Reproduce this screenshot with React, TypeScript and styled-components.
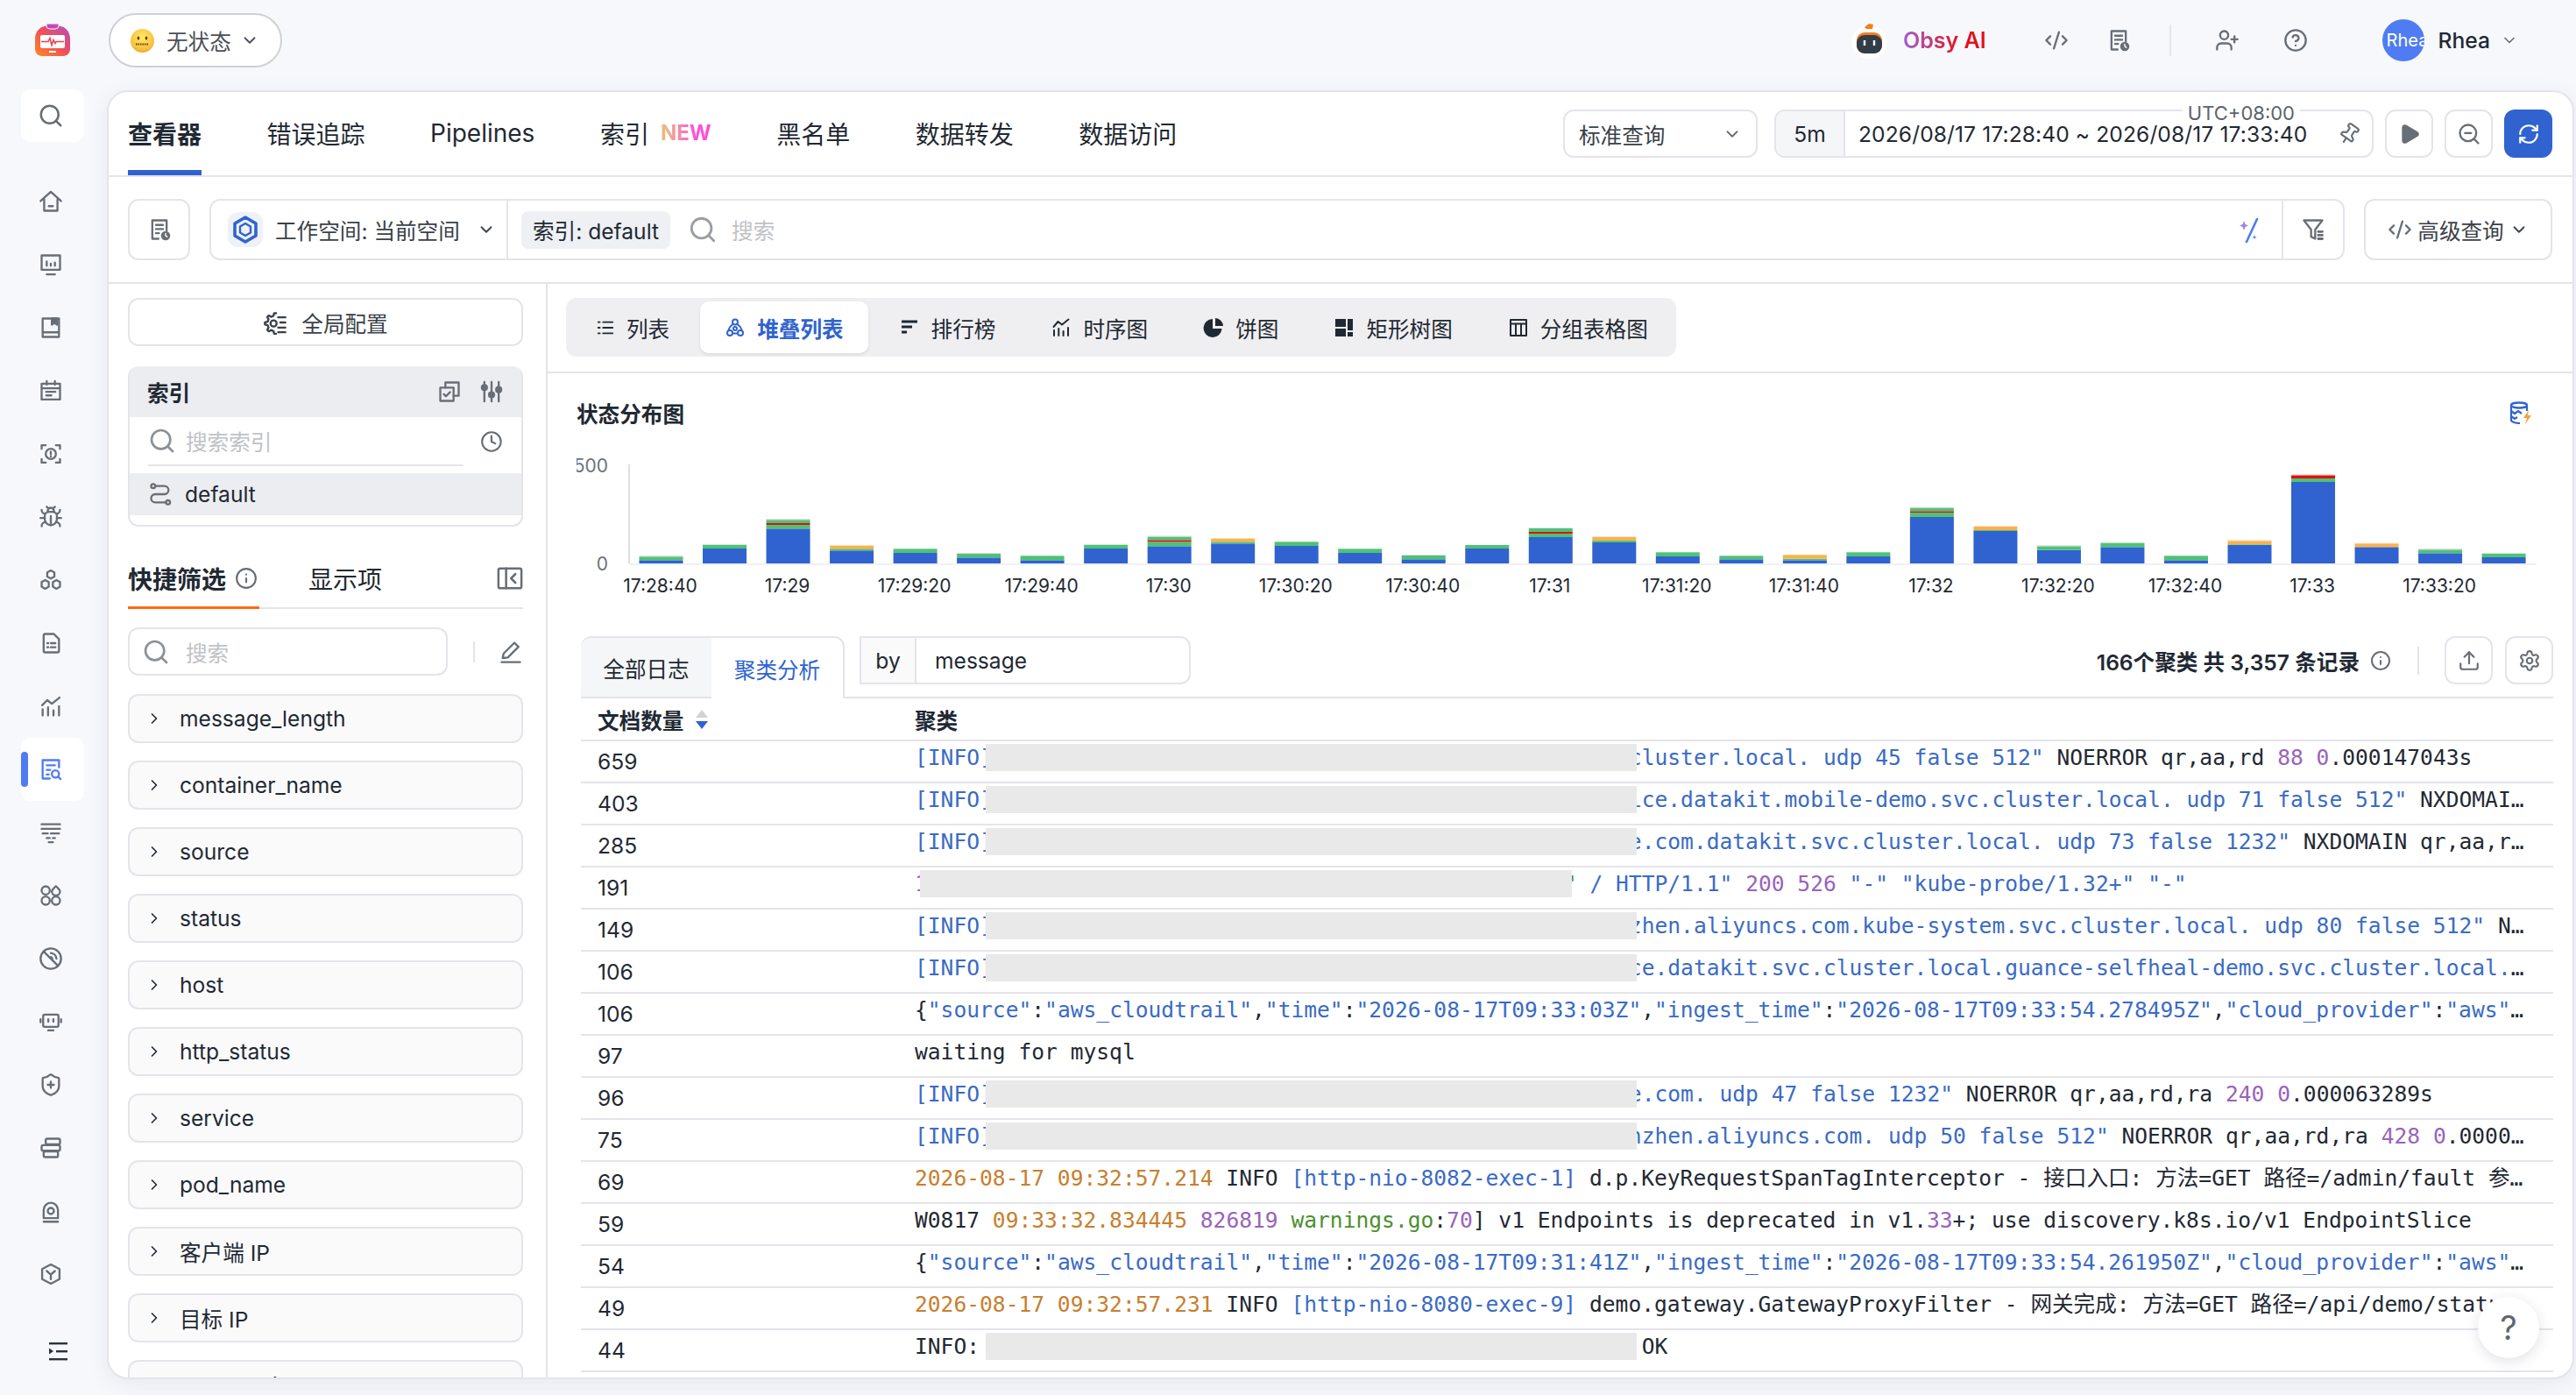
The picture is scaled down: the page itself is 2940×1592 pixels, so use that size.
import React from 'react';
import styled, { createGlobalStyle } from 'styled-components';
import { Bug, ChevronDown, ChevronRight, Clock, CodeXml, Info, Pin, Play, RefreshCw, Search, Settings, ShieldPlus, Upload, UserPlus, ZoomOut, CircleHelp } from 'lucide-react';

const SANS = `Inter, "Noto Sans CJK SC", sans-serif`;
const MONO = `"DejaVu Sans Mono", "Noto Sans CJK SC", monospace`;
const INK = '#1f2933';
const LINE = '#e4e4ea';
const BLUE = '#3063cf';
const GREY = '#686e76';

const GlobalStyle = createGlobalStyle`
	html, body { margin: 0; padding: 0; background: #f6f8fc; }
	body { font-family: ${SANS}; color: ${INK}; font-size: 24.6px; }
	* { box-sizing: border-box; }
`;

const Page = styled.div`
	display: flex;
	width: 2940px;
	height: 1592px;
	overflow: hidden;
	background: #f6f8fc;
`;

const Rail = styled.nav`
	width: 122px;
	flex: none;
	display: flex;
	flex-direction: column;
	padding: 27px 0 38px 24px;
`;

const LogoBox = styled.div`
	height: 37px;
	margin-left: 16px;
	margin-bottom: 38px;
	display: flex;
`;

const RailSearch = styled.div`
	width: 72px;
	height: 60px;
	margin-bottom: 32px;
	background: #fff;
	border-radius: 10px;
	display: flex;
	align-items: center;
	justify-content: center;
	padding-right: 4px;
	color: ${GREY};
`;

const RailItem = styled.div<{ $active?: boolean }>`
	position: relative;
	width: 72px;
	height: 72px;
	flex: none;
	border-radius: 10px;
	padding-right: 4px;
	display: flex;
	align-items: center;
	justify-content: center;
	color: ${({ $active }) => ($active ? '#4f7cf2' : GREY)};
	background: ${({ $active }) => ($active ? '#fff' : 'transparent')};
	${({ $active }) => $active && `
		&::before {
			content: '';
			position: absolute;
			left: 0;
			top: 16px;
			width: 8px;
			height: 40px;
			border-radius: 4px;
			background: #4f7cf2;
		}
	`}
`;

const RailCollapse = styled.div`
	margin-top: auto;
	margin-left: 30px;
	display: flex;
	color: #2b333b;
`;

const MainCol = styled.div`
	flex: 1;
	min-width: 0;
	display: flex;
	flex-direction: column;
`;

const TopBar = styled.header`
	height: 103px;
	flex: none;
	display: flex;
	align-items: center;
	padding: 0 66px 11px 2px;
`;

const StatusPill = styled.div`
	width: 198px;
	height: 62px;
	border: 2px solid #cfd0d4;
	border-radius: 31px;
	background: #fff;
	display: flex;
	align-items: center;
	padding-left: 23px;
	color: #4a5058;
	svg:last-child { margin-left: 10px; }
`;

const PillText = styled.span`
	margin-left: 14px;
`;

const TopRight = styled.div`
	margin-left: auto;
	display: flex;
	align-items: center;
	color: ${GREY};
`;

const ObsyText = styled.span`
	margin: 0 66px 0 14px;
	font-size: 25px;
	font-weight: 600;
	background: linear-gradient(90deg, #a35fd0, #e5101b 70%);
	-webkit-background-clip: text;
	background-clip: text;
	color: transparent;
`;

const TopDivider = styled.span`
	width: 2px;
	height: 36px;
	background: #e6e7ec;
	margin: 0 50px 0 44px;
`;

const Spaced = styled.span<{ $right: number }>`
	display: flex;
	margin-right: ${({ $right }) => $right}px;
`;

const Avatar = styled.span`
	width: 48px;
	height: 48px;
	border-radius: 50%;
	background: #4f7cf2;
	color: #fff;
	font-size: 20px;
	overflow: hidden;
	display: flex;
	align-items: center;
	white-space: nowrap;
	padding-left: 5px;
`;

const UserName = styled.span`
	margin: 0 12px 0 16px;
	font-weight: 500;
	color: ${INK};
`;

const Card = styled.main`
	width: 2816px;
	height: 1471px;
	flex: none;
	position: relative;
	background: #fff;
	border: 2px solid ${LINE};
	border-radius: 24px;
	box-shadow: 0 6px 24px rgba(60, 70, 100, 0.08);
	overflow: hidden;
	display: flex;
	flex-direction: column;
`;

const TabBar = styled.div`
	height: 97px;
	flex: none;
	display: flex;
	align-items: center;
	padding: 0 23px 0 22px;
	border-bottom: 2px solid ${LINE};
`;

const Tabs = styled.div`
	display: flex;
	gap: 74.5px;
	height: 100%;
`;

const Tab = styled.div<{ $active?: boolean }>`
	position: relative;
	display: flex;
	align-items: center;
	gap: 13px;
	font-size: 28px;
	font-weight: ${({ $active }) => ($active ? 700 : 400)};
	padding-bottom: 2px;
	${({ $active }) => $active && `
		&::after {
			content: '';
			position: absolute;
			left: 0;
			right: 0;
			bottom: 0;
			height: 6px;
			background: ${BLUE};
		}
	`}
`;

const NewMark = styled.span`
	font-size: 24px;
	font-weight: 700;
	background: linear-gradient(90deg, #eeb682 10%, #ff4fd8 70%);
	-webkit-background-clip: text;
	background-clip: text;
	color: transparent;
`;

const TabControls = styled.div`
	margin-left: auto;
	display: flex;
	align-items: center;
	gap: 13px;
`;

const ModeSelect = styled.div`
	width: 222px;
	height: 55px;
	margin-right: 6px;
	border: 2px solid ${LINE};
	border-radius: 12px;
	display: flex;
	align-items: center;
	justify-content: space-between;
	padding: 0 16px;
	color: #3a4149;
`;

const TimeGroup = styled.div`
	position: relative;
	width: 684px;
	height: 55px;
	border: 2px solid ${LINE};
	border-radius: 12px;
	display: flex;
	align-items: center;
`;

const TimeAddon = styled.span`
	width: 79px;
	height: 100%;
	display: flex;
	align-items: center;
	justify-content: center;
	background: #f5f6f8;
	border-right: 2px solid ${LINE};
	border-radius: 10px 0 0 10px;
`;

const TimeText = styled.span`
	margin-left: 15px;
	letter-spacing: 0.1px;
	white-space: nowrap;
`;

const TimePin = styled.span`
	margin-left: auto;
	margin-right: 13px;
	display: flex;
	color: ${GREY};
	svg { transform: rotate(35deg); }
`;

const UtcLabel = styled.span`
	position: absolute;
	right: 82px;
	top: -9px;
	background: #fff;
	padding: 0 6px;
	font-size: 22px;
	line-height: 22px;
	color: #5d646c;
`;

const SquareBtn = styled.button<{ $primary?: boolean }>`
	width: 55px;
	height: 55px;
	padding: 0;
	border: ${({ $primary }) => ($primary ? 'none' : `2px solid ${LINE}`)};
	border-radius: 12px;
	background: ${({ $primary }) => ($primary ? BLUE : '#fff')};
	color: ${({ $primary }) => ($primary ? '#fff' : GREY)};
	display: flex;
	align-items: center;
	justify-content: center;
	flex: none;
`;

const Toolbar = styled.div`
	height: 122px;
	flex: none;
	display: flex;
	align-items: center;
	gap: 22px;
	padding: 0 23px 0 22px;
	border-bottom: 2px solid ${LINE};
`;

const HistoryBtn = styled(SquareBtn)`
	width: 71px;
	height: 70px;
`;

const QueryBox = styled.div`
	flex: 1;
	height: 70px;
	border: 2px solid ${LINE};
	border-radius: 12px;
	display: flex;
	align-items: center;
`;

const Workspace = styled.div`
	width: 339px;
	height: 100%;
	flex: none;
	display: flex;
	align-items: center;
	padding: 0 12px 0 19px;
	border-right: 2px solid ${LINE};
	color: #3a4149;
`;

const WorkspaceText = styled.span`
	margin: 0 auto 0 14px;
	white-space: nowrap;
`;

const IndexTag = styled.span`
	margin: 0 20px 0 15px;
	height: 43px;
	padding: 0 13px;
	border-radius: 8px;
	background: #eef0f3;
	display: flex;
	align-items: center;
	white-space: nowrap;
`;

const Placeholder = styled.span<{ $left: number }>`
	margin-left: ${({ $left }) => $left}px;
	color: #bfc2c6;
	white-space: nowrap;
`;

const QueryTail = styled.div`
	margin-left: auto;
	height: 100%;
	display: flex;
	align-items: center;
	color: ${GREY};
`;

const FilterCell = styled.div`
	width: 70px;
	height: 100%;
	margin-left: 20px;
	border-left: 2px solid ${LINE};
	display: flex;
	align-items: center;
	justify-content: center;
`;

const AdvancedBtn = styled.div`
	width: 215px;
	height: 70px;
	flex: none;
	border: 2px solid ${LINE};
	border-radius: 12px;
	display: flex;
	align-items: center;
	justify-content: center;
	gap: 6px;
	color: #3a4149;
	white-space: nowrap;
`;

const Body = styled.div`
	flex: 1;
	min-height: 0;
	display: flex;
`;

const LeftPane = styled.aside`
	width: 501px;
	flex: none;
	padding: 16px 26px 0 22px;
	border-right: 2px solid ${LINE};
	overflow: hidden;
`;

const ConfigBtn = styled.div`
	height: 55px;
	border: 2px solid ${LINE};
	border-radius: 12px;
	display: flex;
	align-items: center;
	justify-content: center;
	gap: 16px;
	color: #3a4149;
`;

const IndexPanel = styled.section`
	height: 183px;
	margin-top: 23px;
	border: 2px solid ${LINE};
	border-top: none;
	border-radius: 12px;
	overflow: hidden;
`;

const IndexHead = styled.div`
	height: 58px;
	background: #ecedf0;
	display: flex;
	align-items: center;
	gap: 20px;
	padding: 0 20px;
	color: ${GREY};
`;

const IndexTitle = styled.strong`
	margin-right: auto;
	color: ${INK};
	font-weight: 700;
`;

const IndexSearch = styled.div`
	height: 64px;
	display: flex;
	align-items: center;
	padding: 0 21px 8px;
	color: ${GREY};
`;

const IndexInput = styled.div`
	width: 363px;
	height: 56px;
	margin-right: 19px;
	border-bottom: 2px solid ${LINE};
	display: flex;
	align-items: center;
	color: #8c9196;
`;

const IndexRow = styled.div`
	height: 48px;
	background: #ecedf0;
	display: flex;
	align-items: center;
	gap: 14px;
	padding: 0 21px;
	color: ${GREY};
`;

const IndexName = styled.span`
	color: ${INK};
`;

const FilterTabs = styled.div`
	height: 60px;
	margin-top: 34px;
	display: flex;
	align-items: center;
	border-bottom: 2px solid ${LINE};
	position: relative;
	color: ${GREY};
	padding-bottom: 8px;
	&::after {
		content: '';
		position: absolute;
		left: 0;
		bottom: -2px;
		width: 150px;
		height: 3px;
		background: #ff6a13;
	}
`;

const FilterTab = styled.span<{ $active?: boolean }>`
	font-size: 28px;
	font-weight: ${({ $active }) => ($active ? 700 : 400)};
	color: ${INK};
	margin-right: ${({ $active }) => ($active ? 10 : 0)}px;
`;

const TabGap = styled.span`
	width: 58px;
`;

const PanelToggle = styled.span`
	margin-left: auto;
	display: flex;
`;

const FilterSearchRow = styled.div`
	margin-top: 21px;
	display: flex;
	align-items: center;
	color: ${GREY};
`;

const FilterInput = styled.div`
	width: 365px;
	height: 55px;
	flex: none;
	border: 2px solid ${LINE};
	border-radius: 12px;
	display: flex;
	align-items: center;
	padding: 0 14px;
	color: #8c9196;
`;

const ThinDivider = styled.span`
	width: 2px;
	height: 24px;
	flex: none;
	margin: 0 27px 0 29px;
	background: ${LINE};
`;

const FacetList = styled.div`
	margin-top: 21px;
	display: flex;
	flex-direction: column;
	gap: 20px;
`;

const Facet = styled.div`
	height: 56px;
	flex: none;
	border: 2px solid ${LINE};
	border-radius: 12px;
	background: #fafafb;
	display: flex;
	align-items: center;
	gap: 19px;
	padding-left: 18px;
`;

const RightPane = styled.section`
	flex: 1;
	min-width: 0;
	display: flex;
	flex-direction: column;
	overflow: hidden;
`;

const ViewRow = styled.div`
	height: 102px;
	flex: none;
	padding: 16px 0 0 21px;
	border-bottom: 2px solid ${LINE};
`;

const ViewTabs = styled.div`
	width: fit-content;
	height: 67px;
	padding: 4px 4px 4px 6px;
	gap: 7px;
	display: flex;
	background: #efeff1;
	border-radius: 12px;
`;

const ViewTab = styled.div<{ $active?: boolean }>`
	display: flex;
	align-items: center;
	gap: 13px;
	padding: 0 28px;
	border-radius: 10px;
	font-weight: ${({ $active }) => ($active ? 600 : 400)};
	color: ${({ $active }) => ($active ? BLUE : INK)};
	background: ${({ $active }) => ($active ? '#fff' : 'transparent')};
	box-shadow: ${({ $active }) => ($active ? '0 2px 4px rgba(0,0,0,0.08)' : 'none')};
`;

const ChartBlock = styled.div`
	height: 300px;
	flex: none;
	padding: 0 22px 0 33px;
`;

const ChartHead = styled.div`
	height: 90px;
	display: flex;
	align-items: center;
	justify-content: space-between;
	padding-right: 24px;
`;

const ChartTitle = styled.strong`
	font-weight: 600;
`;

const ChartSvg = styled.svg`
	display: block;
`;

const LogTabs = styled.div`
	height: 71px;
	flex: none;
	margin: 0 22px 0 38px;
	display: flex;
	position: relative;
`;

const LogTab = styled.div<{ $active?: boolean }>`
	width: ${({ $active }) => ($active ? 152 : 149)}px;
	height: 100%;
	flex: none;
	display: flex;
	align-items: center;
	justify-content: center;
	background: ${({ $active }) => ($active ? '#fff' : '#f5f6f8')};
	color: ${({ $active }) => ($active ? BLUE : INK)};
	border-top: 2px solid ${LINE};
	border-right: ${({ $active }) => ($active ? `2px solid ${LINE}` : 'none')};
	border-bottom: ${({ $active }) => ($active ? 'none' : `2px solid ${LINE}`)};
	border-radius: ${({ $active }) => ($active ? '0 12px 0 0' : '12px 0 0 0')};
`;

const LogTabsRest = styled.div`
	flex: 1;
	display: flex;
	align-items: flex-start;
	padding-left: 17px;
	border-bottom: 2px solid ${LINE};
`;

const ByGroup = styled.div`
	width: 378px;
	height: 55px;
	border: 2px solid ${LINE};
	border-radius: 0 12px 12px 0;
	display: flex;
	align-items: center;
`;

const ByAddon = styled.span`
	width: 63px;
	height: 100%;
	display: flex;
	align-items: center;
	justify-content: center;
	background: #fafafb;
	border-right: 2px solid ${LINE};
`;

const ByValue = styled.span`
	margin-left: 21px;
`;

const LogStats = styled.div`
	margin-left: auto;
	height: 55px;
	display: flex;
	align-items: center;
	color: ${GREY};
`;

const StatText = styled.span`
	font-weight: 600;
	color: ${INK};
	white-space: nowrap;
	margin-right: 12px;
`;

const StatDivider = styled.span`
	width: 2px;
	height: 32px;
	margin: 0 29px 0 30px;
	background: ${LINE};
`;

const StatBtns = styled.div`
	display: flex;
	gap: 14px;
`;

const Table = styled.div`
	margin: 0 22px 0 38px;
	flex: 1;
	min-height: 0;
`;

const HeadRow = styled.div`
	height: 49px;
	display: flex;
	align-items: center;
	border-bottom: 2px solid ${LINE};
	font-weight: 600;
`;

const CountCol = styled.div`
	width: 381px;
	flex: none;
	padding-left: 19px;
	display: flex;
	align-items: center;
	gap: 13px;
`;

const LogRow = styled.div`
	height: 48px;
	display: flex;
	border-bottom: 2px solid ${LINE};
`;

const CountCell = styled(CountCol)`
	height: 46px;
	font-weight: 400;
`;

const Message = styled.div`
	width: 1842px;
	padding-top: 3px;
	font-family: ${MONO};
	font-size: 24.6px;
	line-height: 31px;
	white-space: nowrap;
	overflow: hidden;
	text-overflow: ellipsis;
`;

const tones = {
	ink: INK,
	blue: '#3a6bc5',
	purple: '#9a62bb',
	orange: '#c77f2e',
	green: '#4b8f2f',
};

type Tone = keyof typeof tones;

const Seg = styled.span<{ $tone: Tone }>`
	color: ${({ $tone }) => tones[$tone]};
`;

const Redact = styled.span<{ $width: number; $before: number; $after: number }>`
	position: relative;
	z-index: 1;
	display: inline-block;
	vertical-align: top;
	height: 31px;
	width: ${({ $width }) => $width}px;
	margin-left: ${({ $before }) => -$before}px;
	margin-right: ${({ $after }) => -$after}px;
	background: #e9e9e9;
`;

const HelpFab = styled.div`
	position: absolute;
	right: 38px;
	bottom: 22px;
	width: 70px;
	height: 70px;
	border-radius: 50%;
	background: #fff;
	box-shadow: 0 4px 16px rgba(40, 50, 80, 0.14);
	z-index: 3;
	display: flex;
	align-items: center;
	justify-content: center;
	font-size: 38px;
	color: #5f666e;
`;

/* small drawn icons */
const Svg = ({ size = 28, children, fill = 'none', sw = 2 }: { size?: number; children: React.ReactNode; fill?: string; sw?: number }) => (
	<svg width={size} height={size} viewBox="0 0 24 24" fill={fill} stroke="currentColor" strokeWidth={sw} strokeLinecap="round" strokeLinejoin="round">
		{children}
	</svg>
);

const railIcons: React.ReactNode[] = [
	<Svg key="home"><path d="M2 11.5 12 2.5l10 9M5.5 10v11h13V10M10 16.5h4" /></Svg>,
	<Svg key="board"><path d="M3 3h18v14H3zM8 21.5h8M8 9v4M12 11v2M16 10v3" /></Svg>,
	<Svg key="book"><path d="M4 3h16v18H4zM4 16.5h16" /><path d="M13 3v6l2.5-1.8L18 9V3z" fill="currentColor" /></Svg>,
	<Svg key="cal"><path d="M3 5h18v15.5H3zM8 2.5V6M16 2.5V6M3 9.5h18M7.5 13h9M7.5 16.5h5" /></Svg>,
	<Svg key="scan"><path d="M3 7V3.5h4M17 3.5h4V7M21 17v3.5h-4M7 20.5H3V17" /><circle cx="12" cy="12" r="5" /><path d="M12 9.8v2.6M12 14.4v.1" /></Svg>,
	<Bug key="bug" size={28} />,
	<Svg key="hex"><path d="M12 2.5l3.5 2v4l-3.5 2-3.5-2v-4zM6.5 12l3.5 2v4.5l-3.5 2-3.5-2V14zM17.5 12l3.5 2v4.5l-3.5 2-3.5-2V14z" /></Svg>,
	<Svg key="file"><path d="M5 4.5A1.5 1.5 0 0 1 6.5 3H15l5 5v11.5a1.5 1.5 0 0 1-1.5 1.5h-12A1.5 1.5 0 0 1 5 19.500zM8.500 12h1M12 12h4.500M8.500 16h1M12 16h4.500" /></Svg>,
	<Svg key="chart"><path d="M4 21v-6M9.300 21v-8M14.600 21v-5M20 21v-9M3.500 11l5-5 4.500 3.500 7.500-6" /></Svg>,
	<Svg key="logs"><path d="M20 10V3H4v18h7M8 8h8M8 12.500h3.500M8 17h2" /><circle cx="16.500" cy="16.500" r="3.500" /><path d="m19.500 19.500 2 2" /></Svg>,
	<Svg key="pipe"><path d="M3 4h18M3 8.500h18M4 13h5M12 13h8M8 17.500h3M14 17.500h2M10 21.500h4" /></Svg>,
	<Svg key="apps"><circle cx="7" cy="7" r="4" /><path d="M17 2.800c2.500 2.500 4 3.300 4 5.200a4 4 0 0 1-8 0c0-1.900 1.500-2.700 4-5.200z" /><circle cx="7" cy="17" r="4" /><circle cx="17" cy="17" r="4" /></Svg>,
	<Svg key="nosignal"><circle cx="12" cy="12" r="10" /><path d="m5 5 14 14M12 6.500a6 6 0 0 1 5.500 5.500M12 10.500a2 2 0 0 1 1.500 1.500" /></Svg>,
	<Svg key="robot"><path d="M6 5h12a1.500 1.500 0 0 1 1.500 1.500v9A1.500 1.500 0 0 1 18 17H6a1.500 1.500 0 0 1-1.500-1.500v-9A1.500 1.500 0 0 1 6 5zM2 9.500v3M22 9.500v3M9.500 20.500h5M9.500 9.500v2.500M14.500 9.500v2.500" /></Svg>,
	<ShieldPlus key="shield" size={28} />,
	<Svg key="stack"><rect x="7" y="3" width="14" height="5.500" rx="1.500" /><rect x="3" y="9.300" width="18" height="5.500" rx="1.500" /><rect x="5" y="15.500" width="14" height="5.500" rx="1.500" /></Svg>,
	<Svg key="alarm"><path d="M5 19V11a7 7 0 0 1 14 0v8zM5 22.500h14" /><circle cx="12" cy="12" r="3" /></Svg>,
	<Svg key="cube"><path d="M12 2.500 20.500 7v10L12 21.500 3.500 17V7zM8 9l4 3.500L16 9M12 12.500V17" /></Svg>,
];

const Logo = () => (
	<svg width="40" height="37" viewBox="0 0 40 37">
		<defs>
			<linearGradient id="logoGrad" x1="0" y1="1" x2="1" y2="0">
				<stop offset="0" stopColor="#ff8a1e" />
				<stop offset="0.5" stopColor="#f0505a" />
				<stop offset="1" stopColor="#b34cc0" />
			</linearGradient>
		</defs>
		<path d="M6 5 C10 1 30 1 34 5 C38 8 40 12 40 18 V29 C40 34 36 37 32 37 H8 C4 37 0 34 0 29 V18 C0 12 2 8 6 5z" fill="url(#logoGrad)" />
		<path d="M13 0h14v3a4 4 0 0 1-4 3h-6a4 4 0 0 1-4-3z" fill="#c04bb4" stroke="#fff" strokeWidth="1" />
		<rect x="6" y="13" width="28" height="15" rx="2" fill="#fff" />
		<path d="M7 20.500h8l2-4 2 8 2-6 2 4 1-2h9" fill="none" stroke="#ef3f4a" strokeWidth="1.600" />
		<rect x="16" y="31" width="8" height="2" fill="#fff" />
	</svg>
);

const ZipperFace = () => (
	<svg width="27" height="27" viewBox="0 0 27 27">
		<defs>
			<radialGradient id="faceGrad" cx="0.5" cy="0.35" r="0.7">
				<stop offset="0" stopColor="#fde968" />
				<stop offset="0.75" stopColor="#f8c03a" />
				<stop offset="1" stopColor="#ef9a2c" />
			</radialGradient>
		</defs>
		<circle cx="13.500" cy="13.500" r="13.500" fill="url(#faceGrad)" />
		<ellipse cx="9" cy="10.500" rx="1.300" ry="2" fill="#5a3a1a" />
		<ellipse cx="18" cy="10.500" rx="1.300" ry="2" fill="#5a3a1a" />
		<path d="M6 17.500h15" stroke="#5a3a1a" strokeWidth="2" strokeDasharray="1.500 1" />
	</svg>
);

const Robot = () => (
	<svg width="49" height="42" viewBox="0 0 49 42">
		<ellipse cx="24.500" cy="23" rx="20" ry="19" fill="#fff" />
		<path d="M19 6l5-4 5 1-1 5h-7z" fill="#f57c1f" />
		<rect x="10" y="12" width="29" height="24" rx="9" fill="#f57c1f" />
		<rect x="10" y="15" width="29" height="21" rx="9" fill="#333d47" />
		<path d="M19 21v6M30 21v6" stroke="#fff" strokeWidth="2.400" />
	</svg>
);

const DocClock = () => (
	<Svg>
		<path d="M11 21H5V3h14v10M8.500 7.500h7M8.500 11.500h7M8.500 15.500h3" />
		<circle cx="18" cy="18" r="4.500" fill="currentColor" stroke="none" />
		<path d="M18 15.800V18l1.500 1" stroke="#fff" strokeWidth="1.200" />
	</Svg>
);

const WorkspaceLogo = () => (
	<svg width="40" height="40" viewBox="0 0 40 40">
		<rect width="40" height="40" rx="12" fill="#eef1f8" />
		<path d="M20 6l12 7v14l-12 7-12-7V13z" fill="none" stroke="#3063cf" strokeWidth="3.600" strokeLinejoin="round" />
		<path d="M20 13l6 3.500v7L20 27l-6-3.500v-7z" fill="none" stroke="#3063cf" strokeWidth="2.400" strokeLinejoin="round" />
	</svg>
);

const RouteIcon = () => (
	<Svg><circle cx="5" cy="4" r="2" /><circle cx="19.500" cy="20" r="2" /><path d="M7 4h9a4 4 0 0 1 0 8H7a4 4 0 0 0 0 8h10.500" /></Svg>
);

const SlidersIcon = () => (
	<Svg><path d="M5 2.500v19M12 2.500v19M19 2.500v19" /><circle cx="5" cy="8" r="2.500" fill="currentColor" /><circle cx="12" cy="15" r="2.500" fill="currentColor" /><circle cx="19" cy="10" r="2.500" fill="currentColor" /></Svg>
);

const CopyCheck = () => (
	<Svg><path d="M8 8V3h13v13h-5" /><path d="M3 8h13v13H3zM6.500 14.500l2 2 4-4" /></Svg>
);

const PanelLeft = () => (
	<Svg size={30}><rect x="1.500" y="3" width="21" height="18" rx="1.500" /><path d="M8.500 3v18M17 8l-4 4 4 4" /></Svg>
);

const EditLine = () => (
	<Svg size={30}><path d="M4 18l1-4.500L15.500 3l4 4L9 17.500zM3 22h18" /></Svg>
);

const GearList = () => (
	<Svg><path d="M13 3h-2l-.6 2.500-2.400 1-2.200-1.300L4.300 6.700l1.300 2.200-1 2.400L2 12v2l2.600.6 1 2.400-1.300 2.200 1.500 1.500 2.200-1.300 2.400 1 .6 2.600h2" /><circle cx="10.500" cy="13" r="3" /><path d="M15 7h7M17 12h5M15 17h7M15 21.500h7" /></Svg>
);

const ListIcon = () => (
	<Svg size={22}><path d="M3 5h2M9 5h12M3 12h2M9 12h12M3 19h2M9 19h12" /></Svg>
);

const ClusterIcon = () => (
	<Svg size={24}><circle cx="12" cy="5.500" r="3" /><circle cx="6" cy="18" r="3" /><circle cx="18" cy="18" r="3" /><path d="M9.500 8c-3 2-4.500 5-5 7M14.500 8c3 2 4.500 5 5 7M9 18.500h6" /><circle cx="12" cy="13" r="2" /></Svg>
);

const RankIcon = () => (
	<Svg size={24} sw={3}><path d="M3 5h18M3 11h12M3 17h6" strokeLinecap="butt" /></Svg>
);

const SeriesIcon = () => (
	<Svg size={24}><path d="M4 21v-6M9.300 21v-8M14.600 21v-5M20 21v-9M3.500 11l5-6 4.500 3.500 7.500-6" /></Svg>
);

const PieIcon = () => (
	<svg width="24" height="24" viewBox="0 0 24 24" fill="#1f2933"><path d="M11 2v11h10.500A10.500 10.500 0 1 1 11 2z" /><path d="M14 1a9.500 9.500 0 0 1 9 9h-9z" /></svg>
);

const TreemapIcon = () => (
	<svg width="24" height="24" viewBox="0 0 24 24" fill="#1f2933"><rect x="2" y="2" width="12" height="9" /><rect x="2" y="13" width="12" height="9" /><rect x="16" y="2" width="6" height="13" /><rect x="16" y="17" width="6" height="5" /></svg>
);

const TableIcon = () => (
	<Svg size={24}><path d="M3 3h18v18H3zM3 7.500h18M9 7.500V21M15 7.500V21" /></Svg>
);

const CacheIcon = () => (
	<svg width="26" height="26" viewBox="0 0 26 26" fill="none">
		<ellipse cx="11" cy="4.500" rx="9" ry="3" stroke="#3063cf" strokeWidth="2.400" />
		<path d="M2 5v17c2 2 7 3 10 3M20 5v6M2 11l4 3 4-3 4 3M2 17l4 3 3-2" stroke="#3063cf" strokeWidth="2.200" />
		<path d="M22 10l-6 9h4l-2 7 7-10h-4z" fill="#f5a13c" />
	</svg>
);

const SortArrows = () => (
	<svg width="16" height="26" viewBox="0 0 16 26">
		<path d="M8 2l7 9H1z" fill="#d0d2d6" />
		<path d="M8 24l7-9H1z" fill={BLUE} />
	</svg>
);

const MagicIcon = () => (
	<svg width="32" height="32" viewBox="0 0 32 32" fill="none">
		<path d="M24 4 12 30" stroke="#4f7cf2" strokeWidth="2.600" strokeLinecap="round" />
		<path d="M9 6l1.500 4L14 11.500 10.500 13 9 17l-1.500-4L4 11.500 7.500 10z" fill="#a283e0" />
		<path d="M21 22l.8 2 2 .8-2 .8-.8 2-.8-2-2-.8 2-.8z" fill="#6f8be8" />
	</svg>
);

const FilterList = () => (
	<Svg><path d="M3 3h18l-7 9v9l-4-2v-7z" /><path d="M17 14h4M17 17.500h4M17 21h4" strokeWidth="2.400" /></Svg>
);

const Collapse = () => (
	<svg width="24" height="24" viewBox="0 0 24 24" fill="currentColor">
		<rect x="2" y="2" width="21" height="2.400" />
		<rect x="10" y="11" width="13" height="2.400" />
		<rect x="2" y="20" width="21" height="2.400" />
		<path d="M2 8.500 7 12 2 15.500z" />
	</svg>
);

/* status chart: heights in px, bottom to top */
const C = { blue: '#3063cf', green: '#4fc276', red: '#e30f0f', orange: '#fbb14b', grey: '#c9cdd0', pale: '#f6d6c7' };
type Stack = [keyof typeof C, number][];

const bars: Stack[] = [
	[['blue', 3.7], ['green', 4], ['grey', 1]],
	[['blue', 17], ['green', 4.3]],
	[['blue', 39.7], ['green', 4.3], ['red', 2], ['green', 3.7], ['grey', 1]],
	[['blue', 14.7], ['green', 2], ['orange', 3.7]],
	[['blue', 12], ['green', 4.7]],
	[['blue', 6.7], ['green', 4.3], ['grey', 0.7]],
	[['blue', 3.7], ['green', 5]],
	[['blue', 17], ['green', 4.3]],
	[['blue', 19.7], ['green', 5], ['red', 2], ['green', 3.7], ['grey', 1]],
	[['blue', 22.7], ['green', 2], ['orange', 3.7]],
	[['blue', 20], ['green', 4.7]],
	[['blue', 12], ['green', 4.7]],
	[['blue', 4.7], ['green', 4.3], ['grey', 0.7]],
	[['blue', 17], ['green', 4]],
	[['blue', 30], ['green', 4], ['red', 2], ['green', 4], ['grey', 0.5]],
	[['blue', 24], ['green', 2], ['orange', 4], ['pale', 0.7]],
	[['blue', 8], ['green', 4.7]],
	[['blue', 4.7], ['green', 4]],
	[['blue', 3.7], ['green', 1.7], ['orange', 4.3]],
	[['blue', 8], ['green', 4.7]],
	[['blue', 53], ['green', 5], ['red', 1.7], ['green', 3.7], ['grey', 0.7]],
	[['blue', 37], ['green', 1], ['orange', 4], ['pale', 0.7]],
	[['blue', 15.3], ['green', 4.3], ['grey', 1]],
	[['blue', 18.7], ['green', 4.7]],
	[['blue', 3.7], ['green', 5]],
	[['blue', 21], ['green', 0.7], ['orange', 4], ['pale', 1]],
	[['blue', 93], ['green', 4], ['red', 3.7], ['pale', 1]],
	[['blue', 18.7], ['orange', 4], ['pale', 0.7]],
	[['blue', 11.7], ['green', 4], ['grey', 1]],
	[['blue', 7], ['green', 4.3]],
];

const timeLabels = ['17:28:40', '17:29', '17:29:20', '17:29:40', '17:30', '17:30:20', '17:30:40', '17:31', '17:31:20', '17:31:40', '17:32', '17:32:20', '17:32:40', '17:33', '17:33:20'];

const StatusChart = () => {
	// svg origin sits at x=658, y=516 of the page
	const base = 127;
	const x0 = 71.5;
	const step = 72.52;
	return (
		<ChartSvg width="2240" height="175" viewBox="0 0 2240 175">
			<line x1="60" y1="14" x2="60" y2={base} stroke="#dfe0e4" strokeWidth="2" />
			<line x1="60" y1={base + 1} x2="2237" y2={base + 1} stroke="#f0f0f5" strokeWidth="2" />
			<text x="36" y="23" textAnchor="end" fontSize="21" fill="#6d7379" fontFamily={SANS}>500</text>
			<text x="36" y={base + 8} textAnchor="end" fontSize="21" fill="#6d7379" fontFamily={SANS}>0</text>
			{bars.map((stack, i) => {
				let top = base;
				return stack.map(([tone, h], j) => {
					top -= h;
					return <rect key={`${i}-${j}`} x={x0 + step * i} y={top} width="50" height={h} fill={C[tone]} />;
				});
			})}
			{timeLabels.map((label, i) => (
				<text key={label} x={x0 + 25 + step * 2 * i - 1} y="160" textAnchor="middle" fontSize="21" fill={INK} fontFamily={SANS}>{label}</text>
			))}
		</ChartSvg>
	);
};

/* log rows */
type Part = [Tone, string] | 'cut' | 'cutNum';

const INFO: Part = ['blue', '[INFO]'];

const json = (t: string, ing: string): Part[] => [
	['ink', '{'], ['blue', '"source"'], ['ink', ':'], ['blue', '"aws_cloudtrail"'], ['ink', ','], ['blue', '"time"'], ['ink', ':'],
	['blue', `"2026-08-17T09:${t}Z"`], ['ink', ','], ['blue', '"ingest_time"'], ['ink', ':'], ['blue', `"2026-08-17T09:33:54.${ing}Z"`],
	['ink', ','], ['blue', '"cloud_provider"'], ['ink', ':'], ['blue', '"aws"'], ['ink', ',"region":"cn-north-1"'],
];

const rows: { count: number; parts: Part[] }[] = [
	{ count: 659, parts: [INFO, 'cut', ['blue', 'cluster.local. udp 45 false 512"'], ['ink', ' NOERROR qr,aa,rd '], ['purple', '88 0'], ['ink', '.000147043s']] },
	{ count: 403, parts: [INFO, 'cut', ['blue', 'ice.datakit.mobile-demo.svc.cluster.local. udp 71 false 512"'], ['ink', ' NXDOMAIN qr,aa,rd']] },
	{ count: 285, parts: [INFO, 'cut', ['blue', 'e.com.datakit.svc.cluster.local. udp 73 false 1232"'], ['ink', ' NXDOMAIN qr,aa,rd,ra']] },
	{ count: 191, parts: [['purple', '1'], 'cutNum', ['green', '"'], ['blue', ' / HTTP/1.1"'], ['ink', ' '], ['purple', '200 526'], ['blue', ' "-" "kube-probe/1.32+" "-"']] },
	{ count: 149, parts: [INFO, 'cut', ['blue', 'zhen.aliyuncs.com.kube-system.svc.cluster.local. udp 80 false 512"'], ['ink', ' NOERROR qr']] },
	{ count: 106, parts: [INFO, 'cut', ['blue', 'ce.datakit.svc.cluster.local.guance-selfheal-demo.svc.cluster.local. udp 90']] },
	{ count: 106, parts: json('33:03', '278495') },
	{ count: 97, parts: [['ink', 'waiting for mysql']] },
	{ count: 96, parts: [INFO, 'cut', ['blue', 'e.com. udp 47 false 1232"'], ['ink', ' NOERROR qr,aa,rd,ra '], ['purple', '240 0'], ['ink', '.000063289s']] },
	{ count: 75, parts: [INFO, 'cut', ['blue', 'nzhen.aliyuncs.com. udp 50 false 512"'], ['ink', ' NOERROR qr,aa,rd,ra '], ['purple', '428 0'], ['ink', '.000063289s']] },
	{ count: 69, parts: [['orange', '2026-08-17 09:32:57.214'], ['ink', ' INFO '], ['blue', '[http-nio-8082-exec-1]'], ['ink', ' d.p.KeyRequestSpanTagInterceptor - 接口入口: 方法=GET 路径=/admin/fault 参数=none']] },
	{ count: 59, parts: [['ink', 'W0817 '], ['orange', '09:33:32.834445'], ['ink', ' '], ['purple', '826819'], ['ink', ' '], ['green', 'warnings.go'], ['ink', ':'], ['purple', '70'], ['ink', '] v1 Endpoints is deprecated in v1.'], ['purple', '33'], ['ink', '+; use discovery.k8s.io/v1 EndpointSlice']] },
	{ count: 54, parts: json('31:41', '261950') },
	{ count: 49, parts: [['orange', '2026-08-17 09:32:57.231'], ['ink', ' INFO '], ['blue', '[http-nio-8080-exec-9]'], ['ink', ' demo.gateway.GatewayProxyFilter - 网关完成: 方法=GET 路径=/api/demo/status']] },
	{ count: 44, parts: [['ink', 'INFO: '], 'cut', ['ink', ' OK']] },
	{ count: 41, parts: json('31:12', '250114') },
];

const renderPart = (part: Part, i: number) => {
	if (part === 'cut') return <Redact key={i} $width={743} $before={8} $after={9} />;
	if (part === 'cutNum') return <Redact key={i} $width={744} $before={9} $after={9} />;
	return <Seg key={i} $tone={part[0]}>{part[1]}</Seg>;
};

const facets = ['message_length', 'container_name', 'source', 'status', 'host', 'http_status', 'service', 'pod_name', '客户端 IP', '目标 IP', 'error_code'];

const views: { label: string; icon: React.ReactNode; active?: boolean }[] = [
	{ label: '列表', icon: <ListIcon /> },
	{ label: '堆叠列表', icon: <ClusterIcon />, active: true },
	{ label: '排行榜', icon: <RankIcon /> },
	{ label: '时序图', icon: <SeriesIcon /> },
	{ label: '饼图', icon: <PieIcon /> },
	{ label: '矩形树图', icon: <TreemapIcon /> },
	{ label: '分组表格图', icon: <TableIcon /> },
];

const App = () => (
	<Page>
		<GlobalStyle />
		<Rail>
			<LogoBox><Logo /></LogoBox>
			<RailSearch><Search size={30} /></RailSearch>
			{railIcons.map((icon, i) => (
				<RailItem key={i} $active={i === 9}>{icon}</RailItem>
			))}
			<RailCollapse><Collapse /></RailCollapse>
		</Rail>
		<MainCol>
			<TopBar>
				<StatusPill>
					<ZipperFace />
					<PillText>无状态</PillText>
					<ChevronDown size={22} />
				</StatusPill>
				<TopRight>
					<Robot />
					<ObsyText>Obsy AI</ObsyText>
					<Spaced $right={43}><CodeXml size={28} /></Spaced>
					<DocClock />
					<TopDivider />
					<Spaced $right={50}><UserPlus size={28} /></Spaced>
					<Spaced $right={85}><CircleHelp size={28} /></Spaced>
					<Avatar>Rhea</Avatar>
					<UserName>Rhea</UserName>
					<ChevronDown size={20} />
				</TopRight>
			</TopBar>
			<Card>
				<TabBar>
					<Tabs>
						<Tab $active>查看器</Tab>
						<Tab>错误追踪</Tab>
						<Tab>Pipelines</Tab>
						<Tab>索引<NewMark>NEW</NewMark></Tab>
						<Tab>黑名单</Tab>
						<Tab>数据转发</Tab>
						<Tab>数据访问</Tab>
					</Tabs>
					<TabControls>
						<ModeSelect>标准查询<ChevronDown size={22} color={GREY} /></ModeSelect>
						<TimeGroup>
							<UtcLabel>UTC+08:00</UtcLabel>
							<TimeAddon>5m</TimeAddon>
							<TimeText>2026/08/17 17:28:40 ~ 2026/08/17 17:33:40</TimeText>
							<TimePin><Pin size={26} /></TimePin>
						</TimeGroup>
						<SquareBtn><Play size={26} fill={GREY} /></SquareBtn>
						<SquareBtn><ZoomOut size={28} /></SquareBtn>
						<SquareBtn $primary><RefreshCw size={26} /></SquareBtn>
					</TabControls>
				</TabBar>
				<Toolbar>
					<HistoryBtn><DocClock /></HistoryBtn>
					<QueryBox>
						<Workspace>
							<WorkspaceLogo />
							<WorkspaceText>工作空间: 当前空间</WorkspaceText>
							<ChevronDown size={22} />
						</Workspace>
						<IndexTag>索引: default</IndexTag>
						<Search size={34} color="#9a9ea3" />
						<Placeholder $left={16}>搜索</Placeholder>
						<QueryTail>
							<MagicIcon />
							<FilterCell><FilterList /></FilterCell>
						</QueryTail>
					</QueryBox>
					<AdvancedBtn><CodeXml size={28} color={GREY} />高级查询<ChevronDown size={22} /></AdvancedBtn>
				</Toolbar>
				<Body>
					<LeftPane>
						<ConfigBtn><GearList />全局配置</ConfigBtn>
						<IndexPanel>
							<IndexHead>
								<IndexTitle>索引</IndexTitle>
								<CopyCheck />
								<SlidersIcon />
							</IndexHead>
							<IndexSearch>
								<IndexInput>
									<Search size={32} />
									<Placeholder $left={11}>搜索索引</Placeholder>
								</IndexInput>
								<Clock size={26} />
							</IndexSearch>
							<IndexRow><RouteIcon /><IndexName>default</IndexName></IndexRow>
						</IndexPanel>
						<FilterTabs>
							<FilterTab $active>快捷筛选</FilterTab>
							<Info size={26} />
							<TabGap />
							<FilterTab>显示项</FilterTab>
							<PanelToggle><PanelLeft /></PanelToggle>
						</FilterTabs>
						<FilterSearchRow>
							<FilterInput>
								<Search size={32} />
								<Placeholder $left={18}>搜索</Placeholder>
							</FilterInput>
							<ThinDivider />
							<EditLine />
						</FilterSearchRow>
						<FacetList>
							{facets.map(name => (
								<Facet key={name}><ChevronRight size={20} />{name}</Facet>
							))}
						</FacetList>
					</LeftPane>
					<RightPane>
						<ViewRow>
							<ViewTabs>
								{views.map(v => (
									<ViewTab key={v.label} $active={v.active}>{v.icon}{v.label}</ViewTab>
								))}
							</ViewTabs>
						</ViewRow>
						<ChartBlock>
							<ChartHead><ChartTitle>状态分布图</ChartTitle><CacheIcon /></ChartHead>
							<StatusChart />
						</ChartBlock>
						<LogTabs>
							<LogTab>全部日志</LogTab>
							<LogTab $active>聚类分析</LogTab>
							<LogTabsRest>
								<ByGroup><ByAddon>by</ByAddon><ByValue>message</ByValue></ByGroup>
								<LogStats>
									<StatText>166个聚类 共 3,357 条记录</StatText>
									<Info size={24} />
									<StatDivider />
									<StatBtns>
										<SquareBtn><Upload size={26} /></SquareBtn>
										<SquareBtn><Settings size={26} /></SquareBtn>
									</StatBtns>
								</LogStats>
							</LogTabsRest>
						</LogTabs>
						<Table>
							<HeadRow>
								<CountCol>文档数量<SortArrows /></CountCol>
								聚类
							</HeadRow>
							{rows.map((row, i) => (
								<LogRow key={i}>
									<CountCell>{row.count}</CountCell>
									<Message>{row.parts.map(renderPart)}</Message>
								</LogRow>
							))}
						</Table>
					</RightPane>
				</Body>
				<HelpFab>?</HelpFab>
			</Card>
		</MainCol>
	</Page>
);

export default App;
